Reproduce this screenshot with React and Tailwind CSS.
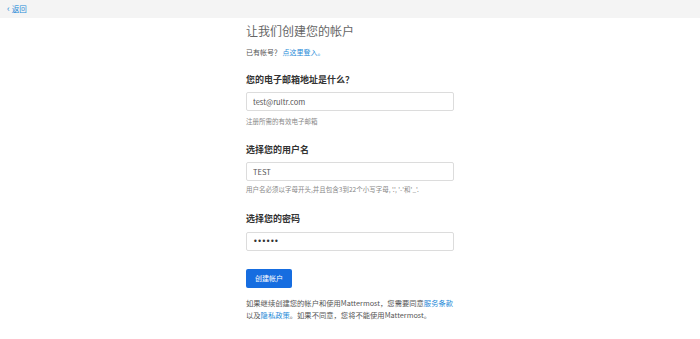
export default function App() {
    return (
    <div className="min-h-screen bg-white text-[#333]" style={{ fontFamily: '"Noto Sans CJK SC", "Open Sans", sans-serif' }}>
        {/* top bar */}
        <div className="h-[18px] bg-[#f4f4f4] flex items-center pl-[7px]">
            <a href="#" className="text-[7.5px] leading-none text-[#2389d7] flex items-center gap-[2px]">
                <span className="text-[9px] leading-none -mt-[1px]">‹</span>返回
            </a>
        </div>
        <div className="mx-auto w-[208px] pt-[5px]">
            <h1 className="text-[12px] leading-[16px] text-[#666]">让我们创建您的帐户</h1>
            <p className="mt-[8px] text-[7px] leading-[10px] text-[#555]">已有帐号？ <a href="#" className="text-[#2389d7]">点这里登入。</a></p>

            {/* email */}
            <h3 className="mt-[17px] text-[9px] leading-[12px] font-bold text-[#333]">您的电子邮箱地址是什么？</h3>
            <input type="text" defaultValue="test@rultr.com" className="mt-[4px] w-full h-[19px] border border-[#dcdcdc] rounded-[2px] px-[6px] text-[7.5px] text-[#555] outline-none" />
            <p className="mt-[6px] text-[6.5px] leading-[9px] text-[#888]">注册所需的有效电子邮箱</p>

            {/* username */}
            <h3 className="mt-[18px] text-[9px] leading-[12px] font-bold text-[#333]">选择您的用户名</h3>
            <input type="text" defaultValue="TEST" className="mt-[4px] w-full h-[19px] border border-[#dcdcdc] rounded-[2px] px-[6px] text-[7.5px] text-[#555] outline-none" />
            <p className="mt-[4px] text-[6.5px] leading-[9px] text-[#888]">用户名必须以字母开头,并且包含3到22个小写字母, '.', '-'和'_'.</p>

            {/* password */}
            <h3 className="mt-[19px] text-[9px] leading-[12px] font-bold text-[#333]">选择您的密码</h3>
            <input type="text" readOnly value="••••••" className="mt-[3px] w-full h-[19px] border border-[#dcdcdc] rounded-[2px] px-[6px] font-['DejaVu_Sans',sans-serif] text-[8px] tracking-[-0.5px] text-[#333] outline-none" />

            <button className="mt-[18px] h-[19px] px-[9px] bg-[#166de0] text-white text-[7px] rounded-[2px]">创建帐户</button>

            <p className="mt-[9px] text-[7.3px] leading-[12px] text-[#555] w-[240px]">
                如果继续创建您的帐户和使用Mattermost，您需要同意<a href="#" className="text-[#2389d7]">服务条款</a><br />
                以及<a href="#" className="text-[#2389d7]">隐私政策</a>。如果不同意，您将不能使用Mattermost。
            </p>
        </div>
    </div>
    );
}
